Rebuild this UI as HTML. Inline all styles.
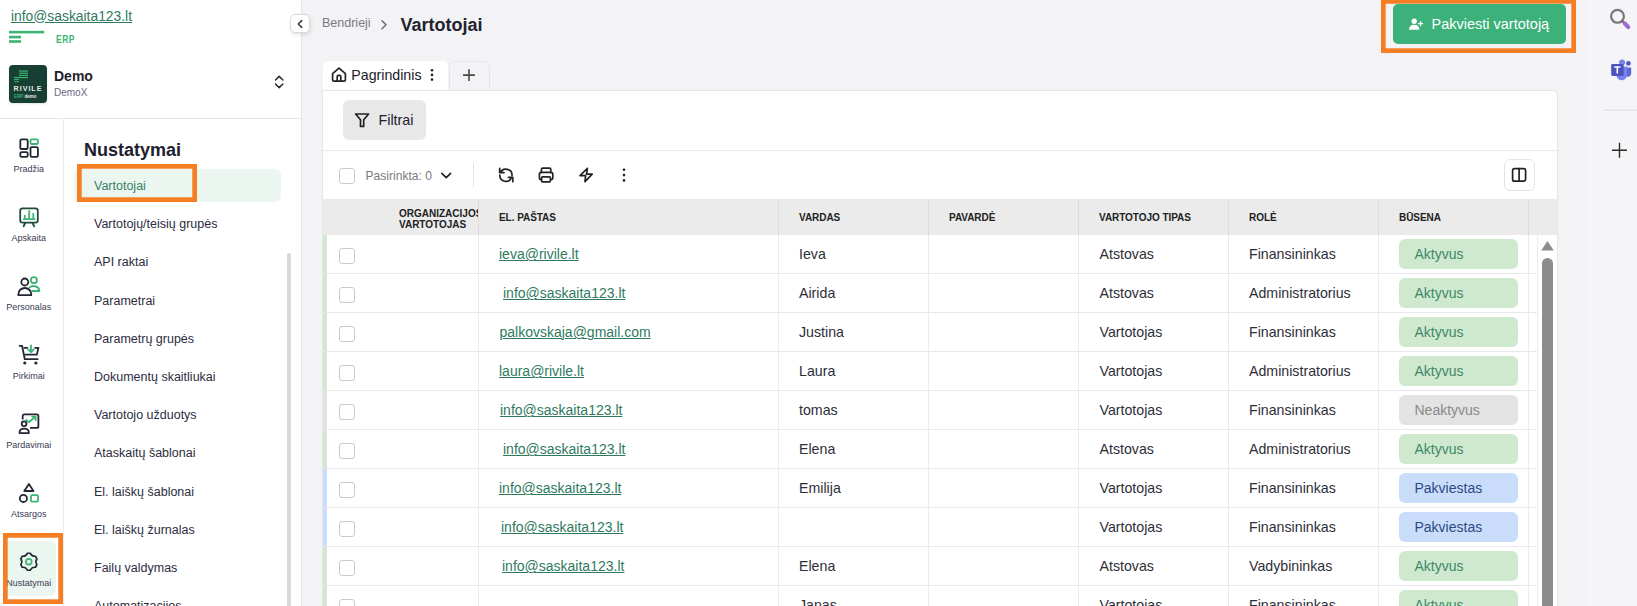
<!DOCTYPE html>
<html><head><meta charset="utf-8">
<style>
*{margin:0;padding:0;box-sizing:border-box}
html,body{width:1637px;height:606px;overflow:hidden;background:#f3f3f6;font-family:"Liberation Sans",sans-serif;color:#2a2a35}
.a{position:absolute;white-space:nowrap}
.t14{font-size:14px;line-height:14px}
.lnk{color:#2f7a5e;text-decoration:underline;text-underline-offset:1px;text-decoration-thickness:1px}
svg{position:absolute;overflow:visible}
#side{position:absolute;left:0;top:0;width:302px;height:606px;background:#fff;border-right:1px solid #e4e4e8}
.lbl{position:absolute;left:0;width:57.6px;text-align:center;font-size:9px;line-height:9px;color:#3a3a52}
.sm{position:absolute;left:94px;font-size:12.5px;line-height:13px;color:#2c2c40}
.hd{position:absolute;font-size:10px;line-height:10px;font-weight:bold;color:#222;letter-spacing:-0.05px}
.cb{position:absolute;width:16px;height:16px;border:1px solid #c9c9c9;border-radius:3px;background:#fff}
.cell{position:absolute;font-size:14.2px;line-height:14px;color:#2e2e38}
.badge{position:absolute;left:1399px;width:119px;height:30px;border-radius:6px}
.badge span{position:absolute;left:15.5px;top:8px;font-size:14px;line-height:14px}
.g{background:#cfe9cf}.g span{color:#3d8866}
.n{background:#e3e3e3}.n span{color:#8a8a8a}
.b{background:#c9ddfa}.b span{color:#2c4a86}
</style></head>
<body>
<!-- SIDEBAR -->
<div id="side">
  <div class="a t14 lnk" style="left:11px;top:8.5px;font-size:13.85px">info@saskaita123.lt</div>
  <svg style="left:0;top:0" width="60" height="50"><g fill="#3cb474"><rect x="9" y="30.8" width="35.2" height="2.6"/><rect x="9" y="35.8" width="12" height="2.6"/><rect x="9" y="40.2" width="12" height="2.6"/></g></svg>
  <div class="a" style="left:56px;top:34.2px;font-size:11px;line-height:11px;font-weight:bold;color:#3cb474;letter-spacing:0.7px;transform:scaleX(0.77);transform-origin:0 0">ERP</div>
  <!-- company logo -->
  <div class="a" style="left:9px;top:65px;width:38px;height:38px;border-radius:4px;background:#173f33;box-shadow:0 1px 2px rgba(0,0,0,.12)"></div>
  <svg style="left:0;top:0" width="60" height="110"><g fill="#3cb474"><rect x="19" y="70.5" width="9" height="1.2"/><rect x="19" y="72.7" width="9" height="1.2"/><rect x="19" y="74.9" width="9" height="1.2"/><rect x="14" y="77" width="14" height="1.2"/><rect x="14" y="79.1" width="5" height="1"/><rect x="14" y="81.2" width="5" height="1"/></g></svg>
  <div class="a" style="left:13.6px;top:85px;font-size:7.2px;line-height:7px;font-weight:bold;color:#e3e8e5;letter-spacing:0.95px">RIVILE</div>
  <div class="a" style="left:14px;top:93.5px;font-size:4.5px;line-height:5px;font-weight:bold;color:#3cb474">ERP <span style="color:#e8ece9">demo</span></div>
  <div class="a" style="left:54px;top:69px;font-size:14px;line-height:14px;font-weight:bold;color:#1f1f2b">Demo</div>
  <div class="a" style="left:54px;top:87.5px;font-size:10px;line-height:10px;color:#6a6a88">DemoX</div>
  <svg style="left:0;top:0" width="300" height="100"><g fill="none" stroke="#2a2a2a" stroke-width="1.5" stroke-linecap="round" stroke-linejoin="round"><path d="M275.5 80 L279.2 76.4 L282.9 80"/><path d="M275.5 84 L279.2 87.6 L282.9 84"/></g></svg>
  <div class="a" style="left:0;top:118px;width:301px;height:1px;background:#e6e6ea"></div>
  <div class="a" style="left:63px;top:119px;width:1px;height:487px;background:#ececf0"></div>

  <!-- icon column -->
  <svg style="left:0;top:0" width="64" height="606"><g fill="none" stroke-width="1.8" stroke-linecap="round" stroke-linejoin="round">
    <g stroke="#232733"><rect x="20.3" y="139.4" width="7.4" height="9.6" rx="1.3"/><rect x="20.3" y="152.2" width="7.4" height="4.6" rx="1.3"/><rect x="30.5" y="147.2" width="7.4" height="9.6" rx="1.3"/></g>
    <rect x="30.5" y="139.4" width="7.4" height="4.6" rx="1.3" stroke="#3cb474"/>
    <g stroke="#1f4d3d"><rect x="20.2" y="208.3" width="17.6" height="14.4" rx="2.4"/><path d="M25.2 223 L23.6 226.3 M32.6 223 L34.2 226.3"/></g>
    <g stroke="#3cb474"><path d="M23.8 219.2 H34.6 M24.8 219 V215.6 M29.2 219 V210.8 M33.3 219 V213.6"/></g>
    <g stroke="#232733"><circle cx="24.8" cy="282" r="3.5"/><path d="M18.4 295.2 V294 A6.4 6 0 0 1 31.2 294 V295.2 Z"/></g>
    <g stroke="#3cb474"><circle cx="33.9" cy="280.2" r="3"/><path d="M29.5 287.6 A5.8 5.2 0 0 1 39.4 291 H32.2"/></g>
    <g stroke="#232733"><path d="M19.6 345.8 H22.1 L24.8 359.2 H37.6"/><path d="M24.4 347.8 H27.2 M35.2 347.8 H38.4 L36.9 354.6 H25.4"/></g>
    <g fill="#232733" stroke="none"><circle cx="24.8" cy="363" r="1.6"/><circle cx="35.9" cy="363" r="1.6"/></g>
    <g stroke="#3cb474"><path d="M31 345.4 V352.2 M28.3 349.5 L31 352.2 L33.7 349.5"/></g>
    <g stroke="#232733"><path d="M22.7 418.8 V416 A1.7 1.7 0 0 1 24.4 414.3 H36.7 A1.7 1.7 0 0 1 38.4 416 V426.2 A1.7 1.7 0 0 1 36.7 427.9 H30.8"/><circle cx="24.1" cy="423.7" r="2.4"/><path d="M19.6 433.1 V432 A4.6 3.4 0 0 1 28.8 432 V433.1 Z"/></g>
    <g stroke="#3cb474"><path d="M26.2 419.8 L28.9 422.2 L34.4 417.4"/><path d="M32.2 416.6 H35.6 V420" /></g>
    <g stroke="#232733"><path d="M28.9 484 L33.5 491 H24.3 Z"/><circle cx="23.4" cy="498.4" r="3.6"/></g>
    <rect x="31" y="495.2" width="7" height="6.4" rx="1" stroke="#3cb474"/>
  </g></svg>
  <div class="lbl" style="top:164.9px">Pradžia</div>
  <div class="lbl" style="top:233.7px">Apskaita</div>
  <div class="lbl" style="top:302.5px">Personalas</div>
  <div class="lbl" style="top:371.9px">Pirkimai</div>
  <div class="lbl" style="top:440.5px">Pardavimai</div>
  <div class="lbl" style="top:509.5px">Atsargos</div>
  <!-- active Nustatymai -->
  <div class="a" style="left:5px;top:541px;width:51px;height:55px;border-radius:6px;background:#eaf6ef"></div>
  <svg style="left:0;top:0" width="64" height="606"><g fill="none" stroke-width="1.65" stroke-linejoin="round">
    <path stroke="#232733" d="M27.36 553.28 L30.34 553.28 Q31.85 556.55 35.44 556.22 L36.93 558.81 Q34.85 561.75 36.93 564.69 L35.44 567.28 Q31.85 566.95 30.34 570.22 L27.36 570.22 Q25.85 566.95 22.26 567.28 L20.77 564.69 Q22.85 561.75 20.77 558.81 L22.26 556.22 Q25.85 556.55 27.36 553.28 Z"/>
    <circle cx="28.8" cy="561.8" r="2.9" stroke="#3cb474"/>
  </g></svg>
  <div class="lbl" style="top:578.7px">Nustatymai</div>
  <svg style="left:3px;top:533px" width="60" height="71"><rect x="2.35" y="2.35" width="55.3" height="66.3" fill="none" stroke="#f57d22" stroke-width="4.7"/></svg>

  <!-- submenu -->
  <div class="a" style="left:84px;top:141px;font-size:18px;line-height:18px;font-weight:bold;color:#20202c">Nustatymai</div>
  <div class="a" style="left:74px;top:169px;width:207px;height:33px;border-radius:6px;background:#eaf6ef"></div>
  <div class="sm" style="top:180.0px;color:#3a7f68">Vartotojai</div>
  <svg style="left:77px;top:164px" width="120" height="38"><rect x="2.35" y="2.35" width="115.3" height="33.3" fill="none" stroke="#f57d22" stroke-width="4.7"/></svg>
  <div class="sm" style="top:218.2px">Vartotojų/teisių grupės</div>
  <div class="sm" style="top:256.4px">API raktai</div>
  <div class="sm" style="top:294.6px">Parametrai</div>
  <div class="sm" style="top:332.8px">Parametrų grupės</div>
  <div class="sm" style="top:371.0px">Dokumentų skaitliukai</div>
  <div class="sm" style="top:409.2px">Vartotojo užduotys</div>
  <div class="sm" style="top:447.4px">Ataskaitų šablonai</div>
  <div class="sm" style="top:485.6px">El. laiškų šablonai</div>
  <div class="sm" style="top:523.8px">El. laiškų žurnalas</div>
  <div class="sm" style="top:562.0px">Failų valdymas</div>
  <div class="sm" style="top:600.2px">Automatizacijos</div>
  <div class="a" style="left:287px;top:253px;width:4px;height:360px;border-radius:2px;background:#d9d9d9"></div>
</div>

<!-- MAIN HEADER -->
<div class="a" style="left:290.4px;top:14.2px;width:19.2px;height:19.1px;background:#fff;border:1px solid #d9d9dc;border-radius:5px;box-shadow:1px 2px 4px rgba(0,0,0,.10)"></div>
<svg style="left:0;top:0" width="320" height="40"><path d="M301.8 20.6 L298.2 24 L301.8 27.4" fill="none" stroke="#3a3a3c" stroke-width="1.5" stroke-linecap="round" stroke-linejoin="round"/></svg>
<div class="a" style="left:322px;top:17.4px;font-size:12.5px;line-height:13px;color:#7a7a82">Bendrieji</div>
<svg style="left:0;top:0" width="400" height="40"><path d="M382 20.8 L386 24.8 L382 28.8" fill="none" stroke="#6a6a70" stroke-width="1.5" stroke-linecap="round" stroke-linejoin="round"/></svg>
<div class="a" style="left:400.5px;top:15.8px;font-size:18px;line-height:18px;font-weight:bold;color:#23232e">Vartotojai</div>

<svg style="left:1381px;top:-1px" width="195" height="54"><rect x="2.35" y="2.35" width="190.3" height="49.3" fill="none" stroke="#f57d22" stroke-width="4.7"/></svg>
<div class="a" style="left:1393px;top:4px;width:173px;height:40px;border-radius:5px;background:#3cb179"></div>
<svg style="left:0;top:0" width="1440" height="40"><g fill="#fff"><circle cx="1414.2" cy="21.3" r="2.7"/><path d="M1409 29.8 C1409 26.4 1411 24.8 1414.2 24.8 C1417.4 24.8 1419.4 26.4 1419.4 29.8 Z"/><rect x="1418" y="23" width="5.1" height="1.3"/><rect x="1419.9" y="21.1" width="1.3" height="5.1"/></g></svg>
<div class="a" style="left:1431.5px;top:17.2px;font-size:14.5px;line-height:14px;color:#fff">Pakviesti vartotoją</div>

<!-- right bar -->
<div class="a" style="left:1586px;top:0;width:51px;height:606px;background:#f5f5f7"></div>
<svg style="left:0;top:0" width="1637" height="170">
  <circle cx="1617.5" cy="16.3" r="6.4" fill="none" stroke="#7a7a7c" stroke-width="2.3"/>
  <path d="M1621.8 20.6 L1624 22.8" stroke="#6a6a6c" stroke-width="2.3"/>
  <path d="M1624.8 23.6 L1628.2 27" stroke="#9d6ad6" stroke-width="4.2" stroke-linecap="round"/>
  <circle cx="1628.4" cy="63.4" r="2.4" fill="#5059c9"/>
  <path d="M1623.6 67.4 H1631.2 V73.2 A3.6 3.6 0 0 1 1624.4 74.8 Z" fill="#5f67d6"/>
  <circle cx="1622.1" cy="62.6" r="3" fill="#7b83eb"/>
  <path d="M1616.4 66.6 H1627 V75 A5.3 5.3 0 0 1 1616.4 75 Z" fill="#7b83eb"/>
  <rect x="1611.2" y="63.9" width="12.4" height="12.1" rx="1.4" fill="#4b53bc"/>
  <path d="M1614.2 67 H1620.4 M1617.3 67 V73.6" stroke="#fff" stroke-width="1.6"/>
  <rect x="1603" y="109.6" width="34" height="1" fill="#dcdce0"/>
  <path d="M1619.5 142.8 V157.8 M1612 150.3 H1627" stroke="#2a2a2a" stroke-width="1.4"/>
</svg>

<!-- TABS -->
<div class="a" style="left:448.5px;top:60.5px;width:41.5px;height:30px;background:#f3f3f6;border:1px solid #e6e6e9;border-bottom:none;border-radius:6px 6px 0 0"></div>
<div class="a" style="left:323px;top:61px;width:125px;height:30px;background:#fff;border-radius:6px 6px 0 0"></div>
<svg style="left:0;top:0" width="500" height="100"><g fill="none" stroke="#222" stroke-width="1.7" stroke-linejoin="round" stroke-linecap="round">
  <path d="M332.6 79.8 V73.6 L339 68.2 L345.4 73.6 V79.8 A1.4 1.4 0 0 1 344 81.2 H334 A1.4 1.4 0 0 1 332.6 79.8 Z"/><path d="M337.2 81.2 V76.6 Q337.2 75.3 338.5 75.3 H339.5 Q340.8 75.3 340.8 76.6 V81.2"/>
</g><g fill="#222"><circle cx="432" cy="70.2" r="1.3"/><circle cx="432" cy="74.9" r="1.3"/><circle cx="432" cy="79.6" r="1.3"/></g>
<path d="M469 69.2 V81 M463.1 75.1 H474.9" stroke="#4a4a4c" stroke-width="1.6"/></svg>
<div class="a" style="left:351.3px;top:67.9px;font-size:14.2px;line-height:14px;color:#20202a">Pagrindinis</div>

<!-- CARD -->
<div class="a" style="left:322px;top:90px;width:1236px;height:530px;background:#fff;border:1px solid #e6e6ea;border-radius:0 6px 0 0"></div>
<div class="a" style="left:343px;top:100px;width:83px;height:40px;border-radius:6px;background:#e8e8e9"></div>
<svg style="left:0;top:0" width="400" height="140"><path d="M355.6 114 H368.6 L363.7 119.8 V126.4 L360.5 126.4 V119.8 Z" fill="none" stroke="#222" stroke-width="1.7" stroke-linejoin="round"/></svg>
<div class="a" style="left:378.5px;top:113.3px;font-size:14.3px;line-height:14px;color:#20202a">Filtrai</div>
<div class="a" style="left:323px;top:150px;width:1234px;height:1px;background:#e8e8ec"></div>

<!-- toolbar -->
<div class="cb" style="left:339px;top:168px"></div>
<div class="a" style="left:365.5px;top:169.8px;font-size:12.1px;line-height:12px;color:#7a7a82">Pasirinkta: 0</div>
<svg style="left:0;top:0" width="1560" height="200"><g fill="none" stroke="#222" stroke-width="1.7" stroke-linecap="round" stroke-linejoin="round">
  <path d="M441.8 173.4 L446.2 177.6 L450.6 173.4"/>
  <path d="M500.4 172.6 A6.1 6.1 0 0 1 512 175.6 M499.7 168.3 V172.6 H504"/>
  <path d="M499.8 175.2 A6.1 6.1 0 0 0 511.6 177.4 M508.4 177.4 H512.8 V181.7"/>
  <path d="M541.4 172.4 V169.6 A1.4 1.4 0 0 1 542.8 168.2 H549.4 A1.4 1.4 0 0 1 550.8 169.6 V172.4"/>
  <path d="M541.2 179.6 H540.6 A1.8 1.8 0 0 1 539.4 177.8 V174.2 A1.8 1.8 0 0 1 541.2 172.4 H551 A1.8 1.8 0 0 1 552.8 174.2 V177.8 A1.8 1.8 0 0 1 551 179.6 H550.8"/>
  <rect x="541.6" y="176.8" width="8.8" height="5" rx="1"/>
  <path d="M587.4 168.4 L580 175.7 H585.6 L585 181.6 L592.2 174.2 H586.6 Z"/>
  <rect x="1512.6" y="168.6" width="13" height="12.6" rx="2"/><path d="M1519.1 168.6 V181.2"/>
</g><g fill="#222"><circle cx="624" cy="169.8" r="1.3"/><circle cx="624" cy="175.1" r="1.3"/><circle cx="624" cy="180.4" r="1.3"/></g></svg>
<div class="a" style="left:473px;top:163px;width:1px;height:24px;background:#e2e2e6"></div>
<div class="a" style="left:1504px;top:159px;width:31px;height:32px;border:1px solid #dfe4ee;border-radius:6px"></div>

<!-- table header -->
<div class="a" style="left:323px;top:199px;width:1234px;height:36px;background:#ebebec"></div>
<div class="a" style="left:478px;top:199px;width:1px;height:36px;background:#dcdcde"></div>
<div class="a" style="left:778px;top:199px;width:1px;height:36px;background:#dcdcde"></div>
<div class="a" style="left:928px;top:199px;width:1px;height:36px;background:#dcdcde"></div>
<div class="a" style="left:1078px;top:199px;width:1px;height:36px;background:#dcdcde"></div>
<div class="a" style="left:1228px;top:199px;width:1px;height:36px;background:#dcdcde"></div>
<div class="a" style="left:1378px;top:199px;width:1px;height:36px;background:#dcdcde"></div>
<div class="a" style="left:1528px;top:199px;width:1px;height:36px;background:#dcdcde"></div>
<div class="hd" style="left:399px;top:208.4px;line-height:11px;letter-spacing:0;width:79px;overflow:hidden">ORGANIZACIJOS<br>VARTOTOJAS</div>
<div class="hd" style="left:499px;top:213.1px">EL. PAŠTAS</div>
<div class="hd" style="left:799px;top:213.1px">VARDAS</div>
<div class="hd" style="left:949px;top:213.1px">PAVARDĖ</div>
<div class="hd" style="left:1099px;top:213.1px">VARTOTOJO TIPAS</div>
<div class="hd" style="left:1249px;top:213.1px">ROLĖ</div>
<div class="hd" style="left:1399px;top:213.1px">BŪSENA</div>

<div class="a" style="left:323px;top:235px;width:1214px;height:39px;border-bottom:1px solid #e8e8ea"></div>
<div class="a" style="left:323px;top:235px;width:4px;height:38px;background:#cfe9cf"></div>
<div class="cb" style="left:339px;top:248px"></div>
<div class="a t14 lnk" style="left:499px;top:247.15px">ieva@rivile.lt</div>
<div class="cell" style="left:799px;top:247.15px">Ieva</div>
<div class="cell" style="left:1099.5px;top:247.15px">Atstovas</div>
<div class="cell" style="left:1249px;top:247.15px">Finansininkas</div>
<div class="badge g" style="top:239px"><span>Aktyvus</span></div>
<div class="a" style="left:323px;top:274px;width:1214px;height:39px;border-bottom:1px solid #e8e8ea"></div>
<div class="a" style="left:323px;top:274px;width:4px;height:38px;background:#cfe9cf"></div>
<div class="cb" style="left:339px;top:287px"></div>
<div class="a t14 lnk" style="left:503px;top:286.15px">info@saskaita123.lt</div>
<div class="cell" style="left:799px;top:286.15px">Airida</div>
<div class="cell" style="left:1099.5px;top:286.15px">Atstovas</div>
<div class="cell" style="left:1249px;top:286.15px">Administratorius</div>
<div class="badge g" style="top:278px"><span>Aktyvus</span></div>
<div class="a" style="left:323px;top:313px;width:1214px;height:39px;border-bottom:1px solid #e8e8ea"></div>
<div class="a" style="left:323px;top:313px;width:4px;height:38px;background:#cfe9cf"></div>
<div class="cb" style="left:339px;top:326px"></div>
<div class="a t14 lnk" style="left:499.5px;top:325.15px">palkovskaja@gmail.com</div>
<div class="cell" style="left:799px;top:325.15px">Justina</div>
<div class="cell" style="left:1099.5px;top:325.15px">Vartotojas</div>
<div class="cell" style="left:1249px;top:325.15px">Finansininkas</div>
<div class="badge g" style="top:317px"><span>Aktyvus</span></div>
<div class="a" style="left:323px;top:352px;width:1214px;height:39px;border-bottom:1px solid #e8e8ea"></div>
<div class="a" style="left:323px;top:352px;width:4px;height:38px;background:#cfe9cf"></div>
<div class="cb" style="left:339px;top:365px"></div>
<div class="a t14 lnk" style="left:499px;top:364.15px">laura@rivile.lt</div>
<div class="cell" style="left:799px;top:364.15px">Laura</div>
<div class="cell" style="left:1099.5px;top:364.15px">Vartotojas</div>
<div class="cell" style="left:1249px;top:364.15px">Administratorius</div>
<div class="badge g" style="top:356px"><span>Aktyvus</span></div>
<div class="a" style="left:323px;top:391px;width:1214px;height:39px;border-bottom:1px solid #e8e8ea"></div>
<div class="a" style="left:323px;top:391px;width:4px;height:38px;background:#e2e2e2"></div>
<div class="cb" style="left:339px;top:404px"></div>
<div class="a t14 lnk" style="left:500px;top:403.15px">info@saskaita123.lt</div>
<div class="cell" style="left:799px;top:403.15px">tomas</div>
<div class="cell" style="left:1099.5px;top:403.15px">Vartotojas</div>
<div class="cell" style="left:1249px;top:403.15px">Finansininkas</div>
<div class="badge n" style="top:395px"><span>Neaktyvus</span></div>
<div class="a" style="left:323px;top:430px;width:1214px;height:39px;border-bottom:1px solid #e8e8ea"></div>
<div class="a" style="left:323px;top:430px;width:4px;height:38px;background:#cfe9cf"></div>
<div class="cb" style="left:339px;top:443px"></div>
<div class="a t14 lnk" style="left:503px;top:442.15px">info@saskaita123.lt</div>
<div class="cell" style="left:799px;top:442.15px">Elena</div>
<div class="cell" style="left:1099.5px;top:442.15px">Atstovas</div>
<div class="cell" style="left:1249px;top:442.15px">Administratorius</div>
<div class="badge g" style="top:434px"><span>Aktyvus</span></div>
<div class="a" style="left:323px;top:469px;width:1214px;height:39px;border-bottom:1px solid #e8e8ea"></div>
<div class="a" style="left:323px;top:469px;width:4px;height:38px;background:#c9ddfa"></div>
<div class="cb" style="left:339px;top:482px"></div>
<div class="a t14 lnk" style="left:499px;top:481.15px">info@saskaita123.lt</div>
<div class="cell" style="left:799px;top:481.15px">Emilija</div>
<div class="cell" style="left:1099.5px;top:481.15px">Vartotojas</div>
<div class="cell" style="left:1249px;top:481.15px">Finansininkas</div>
<div class="badge b" style="top:473px"><span>Pakviestas</span></div>
<div class="a" style="left:323px;top:508px;width:1214px;height:39px;border-bottom:1px solid #e8e8ea"></div>
<div class="a" style="left:323px;top:508px;width:4px;height:38px;background:#c9ddfa"></div>
<div class="cb" style="left:339px;top:521px"></div>
<div class="a t14 lnk" style="left:501px;top:520.15px">info@saskaita123.lt</div>
<div class="cell" style="left:1099.5px;top:520.15px">Vartotojas</div>
<div class="cell" style="left:1249px;top:520.15px">Finansininkas</div>
<div class="badge b" style="top:512px"><span>Pakviestas</span></div>
<div class="a" style="left:323px;top:547px;width:1214px;height:39px;border-bottom:1px solid #e8e8ea"></div>
<div class="a" style="left:323px;top:547px;width:4px;height:38px;background:#cfe9cf"></div>
<div class="cb" style="left:339px;top:560px"></div>
<div class="a t14 lnk" style="left:502px;top:559.15px">info@saskaita123.lt</div>
<div class="cell" style="left:799px;top:559.15px">Elena</div>
<div class="cell" style="left:1099.5px;top:559.15px">Atstovas</div>
<div class="cell" style="left:1249px;top:559.15px">Vadybininkas</div>
<div class="badge g" style="top:551px"><span>Aktyvus</span></div>
<div class="a" style="left:323px;top:586px;width:1214px;height:39px;border-bottom:1px solid #e8e8ea"></div>
<div class="a" style="left:323px;top:586px;width:4px;height:38px;background:#cfe9cf"></div>
<div class="cb" style="left:339px;top:599px"></div>
<div class="cell" style="left:799px;top:598.15px">Janas</div>
<div class="cell" style="left:1099.5px;top:598.15px">Vartotojas</div>
<div class="cell" style="left:1249px;top:598.15px">Finansininkas</div>
<div class="badge g" style="top:590px"><span>Aktyvus</span></div>
<div class="a" style="left:478px;top:235px;width:1px;height:380px;background:#ebebed"></div>
<div class="a" style="left:778px;top:235px;width:1px;height:380px;background:#ebebed"></div>
<div class="a" style="left:928px;top:235px;width:1px;height:380px;background:#ebebed"></div>
<div class="a" style="left:1078px;top:235px;width:1px;height:380px;background:#ebebed"></div>
<div class="a" style="left:1228px;top:235px;width:1px;height:380px;background:#ebebed"></div>
<div class="a" style="left:1378px;top:235px;width:1px;height:380px;background:#ebebed"></div>
<div class="a" style="left:1528px;top:235px;width:1px;height:380px;background:#ebebed"></div>
<div class="a" style="left:1537px;top:235px;width:1px;height:380px;background:#ebebed"></div>

<!-- table scrollbar -->
<svg style="left:0;top:0" width="1560" height="260"><path d="M1541.2 250.6 L1547.5 241 L1553.8 250.6 Z" fill="#8d8d8d"/></svg>
<div class="a" style="left:1542px;top:258px;width:11px;height:360px;border-radius:5.5px;background:#8d8d8d"></div>
</body></html>
